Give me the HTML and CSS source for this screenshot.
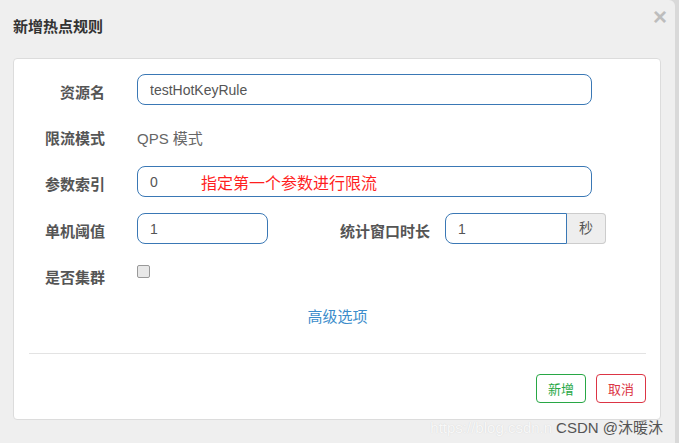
FILE: index.html
```html
<!DOCTYPE html>
<html lang="zh-CN">
<head>
    <meta charset="UTF-8">
    <meta name="viewport" content="width=device-width, initial-scale=1.0">
    <title>新增热点规则</title>
    <link rel="stylesheet" href="styles.css">
</head>
<body>
    <div class="dialog">
        <div class="dialog-header">
            <div class="dialog-title">新增热点规则</div>
            <button class="close">&times;</button>
        </div>
        <div class="card">
            <div class="form">
                <div class="form-row">
                    <label class="form-label">资源名</label>
                    <input class="input wide" type="text" value="testHotKeyRule">
                </div>
                <div class="form-row">
                    <label class="form-label">限流模式</label>
                    <span class="static">QPS 模式</span>
                </div>
                <div class="form-row">
                    <label class="form-label">参数索引</label>
                    <div class="input wide with-note">
                        <span class="value">0</span>
                        <span class="note">指定第一个参数进行限流</span>
                    </div>
                </div>
                <div class="form-row">
                    <label class="form-label">单机阈值</label>
                    <input class="input short" type="text" value="1">
                    <label class="form-label second">统计窗口时长</label>
                    <div class="input-group">
                        <input class="input grouped" type="text" value="1">
                        <span class="addon">秒</span>
                    </div>
                </div>
                <div class="form-row">
                    <label class="form-label">是否集群</label>
                    <span class="checkbox"></span>
                </div>
            </div>
            <div class="advanced"><a href="#" class="link">高级选项</a></div>
            <hr class="divider">
            <div class="actions">
                <button class="btn btn-green">新增</button>
                <button class="btn btn-red">取消</button>
            </div>
        </div>
        <div class="watermark">
            <span class="wm-url">https://blog.csdn.n</span>
            <span class="wm-name">CSDN @沐暖沐</span>
        </div>
    </div>
</body>
</html>
```

FILE: styles.css
```css
body {
    margin: 0;
    padding: 0;
    background-color: #d9d9d9;
    font-family: "Liberation Sans", "Noto Sans CJK SC", sans-serif;
    color: #555;
}

.dialog {
    position: relative;
    width: 675px;
    height: 443px;
    background-color: #efefef;
    border-radius: 0 6px 0 0;
    overflow: hidden;
}

.dialog-header {
    display: flex;
    justify-content: space-between;
    align-items: flex-start;
    height: 58px;
    padding: 0 8px 0 13px;
    box-sizing: border-box;
}

.dialog-title {
    margin-top: 17px;
    font-size: 15px;
    line-height: 20px;
    font-weight: bold;
    color: #333;
}

.close {
    margin-top: 5px;
    padding: 0;
    background: none;
    border: none;
    font-family: "Liberation Sans", sans-serif;
    font-size: 24px;
    font-weight: bold;
    line-height: 24px;
    color: #bdbdbd;
    cursor: pointer;
}

.card {
    margin-left: 13px;
    width: 648px;
    height: 362px;
    box-sizing: border-box;
    background-color: #fff;
    border: 1px solid #dcdcdc;
    border-radius: 4px;
    padding: 15px 14px 0 15px;
}

.form {
    display: flex;
    flex-direction: column;
    gap: 15px;
}

.form-row {
    display: flex;
    align-items: flex-start;
    height: 31px;
}

.form-row:nth-child(4) {
    margin-top: 1px;
}

.form-label {
    width: 76px;
    margin-right: 32px;
    text-align: right;
    font-size: 15px;
    line-height: 31px;
    padding-top: 3px;
    font-weight: bold;
    color: #555;
}

.form-label.second {
    width: 93px;
    margin-left: 69px;
    margin-right: 15px;
}

.static {
    font-size: 15px;
    line-height: 31px;
    padding-top: 3px;
    color: #666;
}

.input {
    height: 31px;
    box-sizing: border-box;
    border: 1px solid #3a78b5;
    border-radius: 8px;
    padding: 0 12px;
    font-family: inherit;
    font-size: 14px;
    color: #555;
    background-color: #fff;
    outline: none;
}

.wide {
    width: 455px;
}

.short {
    width: 131px;
}

.with-note {
    display: flex;
    align-items: center;
}

.value {
    width: 51px;
}

.note {
    font-size: 16px;
    color: #ff1f1f;
}

.input-group {
    display: flex;
}

.input.grouped {
    width: 122px;
    border-radius: 8px 0 0 8px;
}

.addon {
    width: 39px;
    height: 31px;
    box-sizing: border-box;
    border: 1px solid #ccc;
    border-left: none;
    border-radius: 0 4px 4px 0;
    background-color: #eee;
    font-size: 14px;
    line-height: 29px;
    text-align: center;
    color: #555;
}

.checkbox {
    margin-top: 6px;
    width: 11px;
    height: 11px;
    border: 1px solid #999;
    border-radius: 2px;
    background-color: #e8e8e8;
}

.advanced {
    margin-top: 16px;
    text-align: center;
    line-height: 22px;
}

.link {
    font-size: 15px;
    color: #3c8dcb;
    text-decoration: none;
}

.divider {
    margin: 25px 0 0;
    border: none;
    border-top: 1px solid #e3e3e3;
}

.actions {
    display: flex;
    justify-content: flex-end;
    gap: 10px;
    margin-top: 20px;
}

.btn {
    width: 50px;
    height: 29px;
    background-color: #fff;
    border-radius: 4px;
    font-family: inherit;
    font-size: 13px;
    cursor: pointer;
}

.btn-green {
    border: 1px solid #28a745;
    color: #28a745;
}

.btn-red {
    border: 1px solid #dc3545;
    color: #dc3545;
}

.watermark {
    position: absolute;
    right: 12px;
    bottom: 5px;
    display: flex;
    gap: 4px;
    font-size: 15px;
    line-height: 20px;
    white-space: nowrap;
}

.wm-url {
    color: #f8f8f8;
    text-shadow: 0 0 1px #d0d0d0;
}

.wm-name {
    color: #555;
}
```
